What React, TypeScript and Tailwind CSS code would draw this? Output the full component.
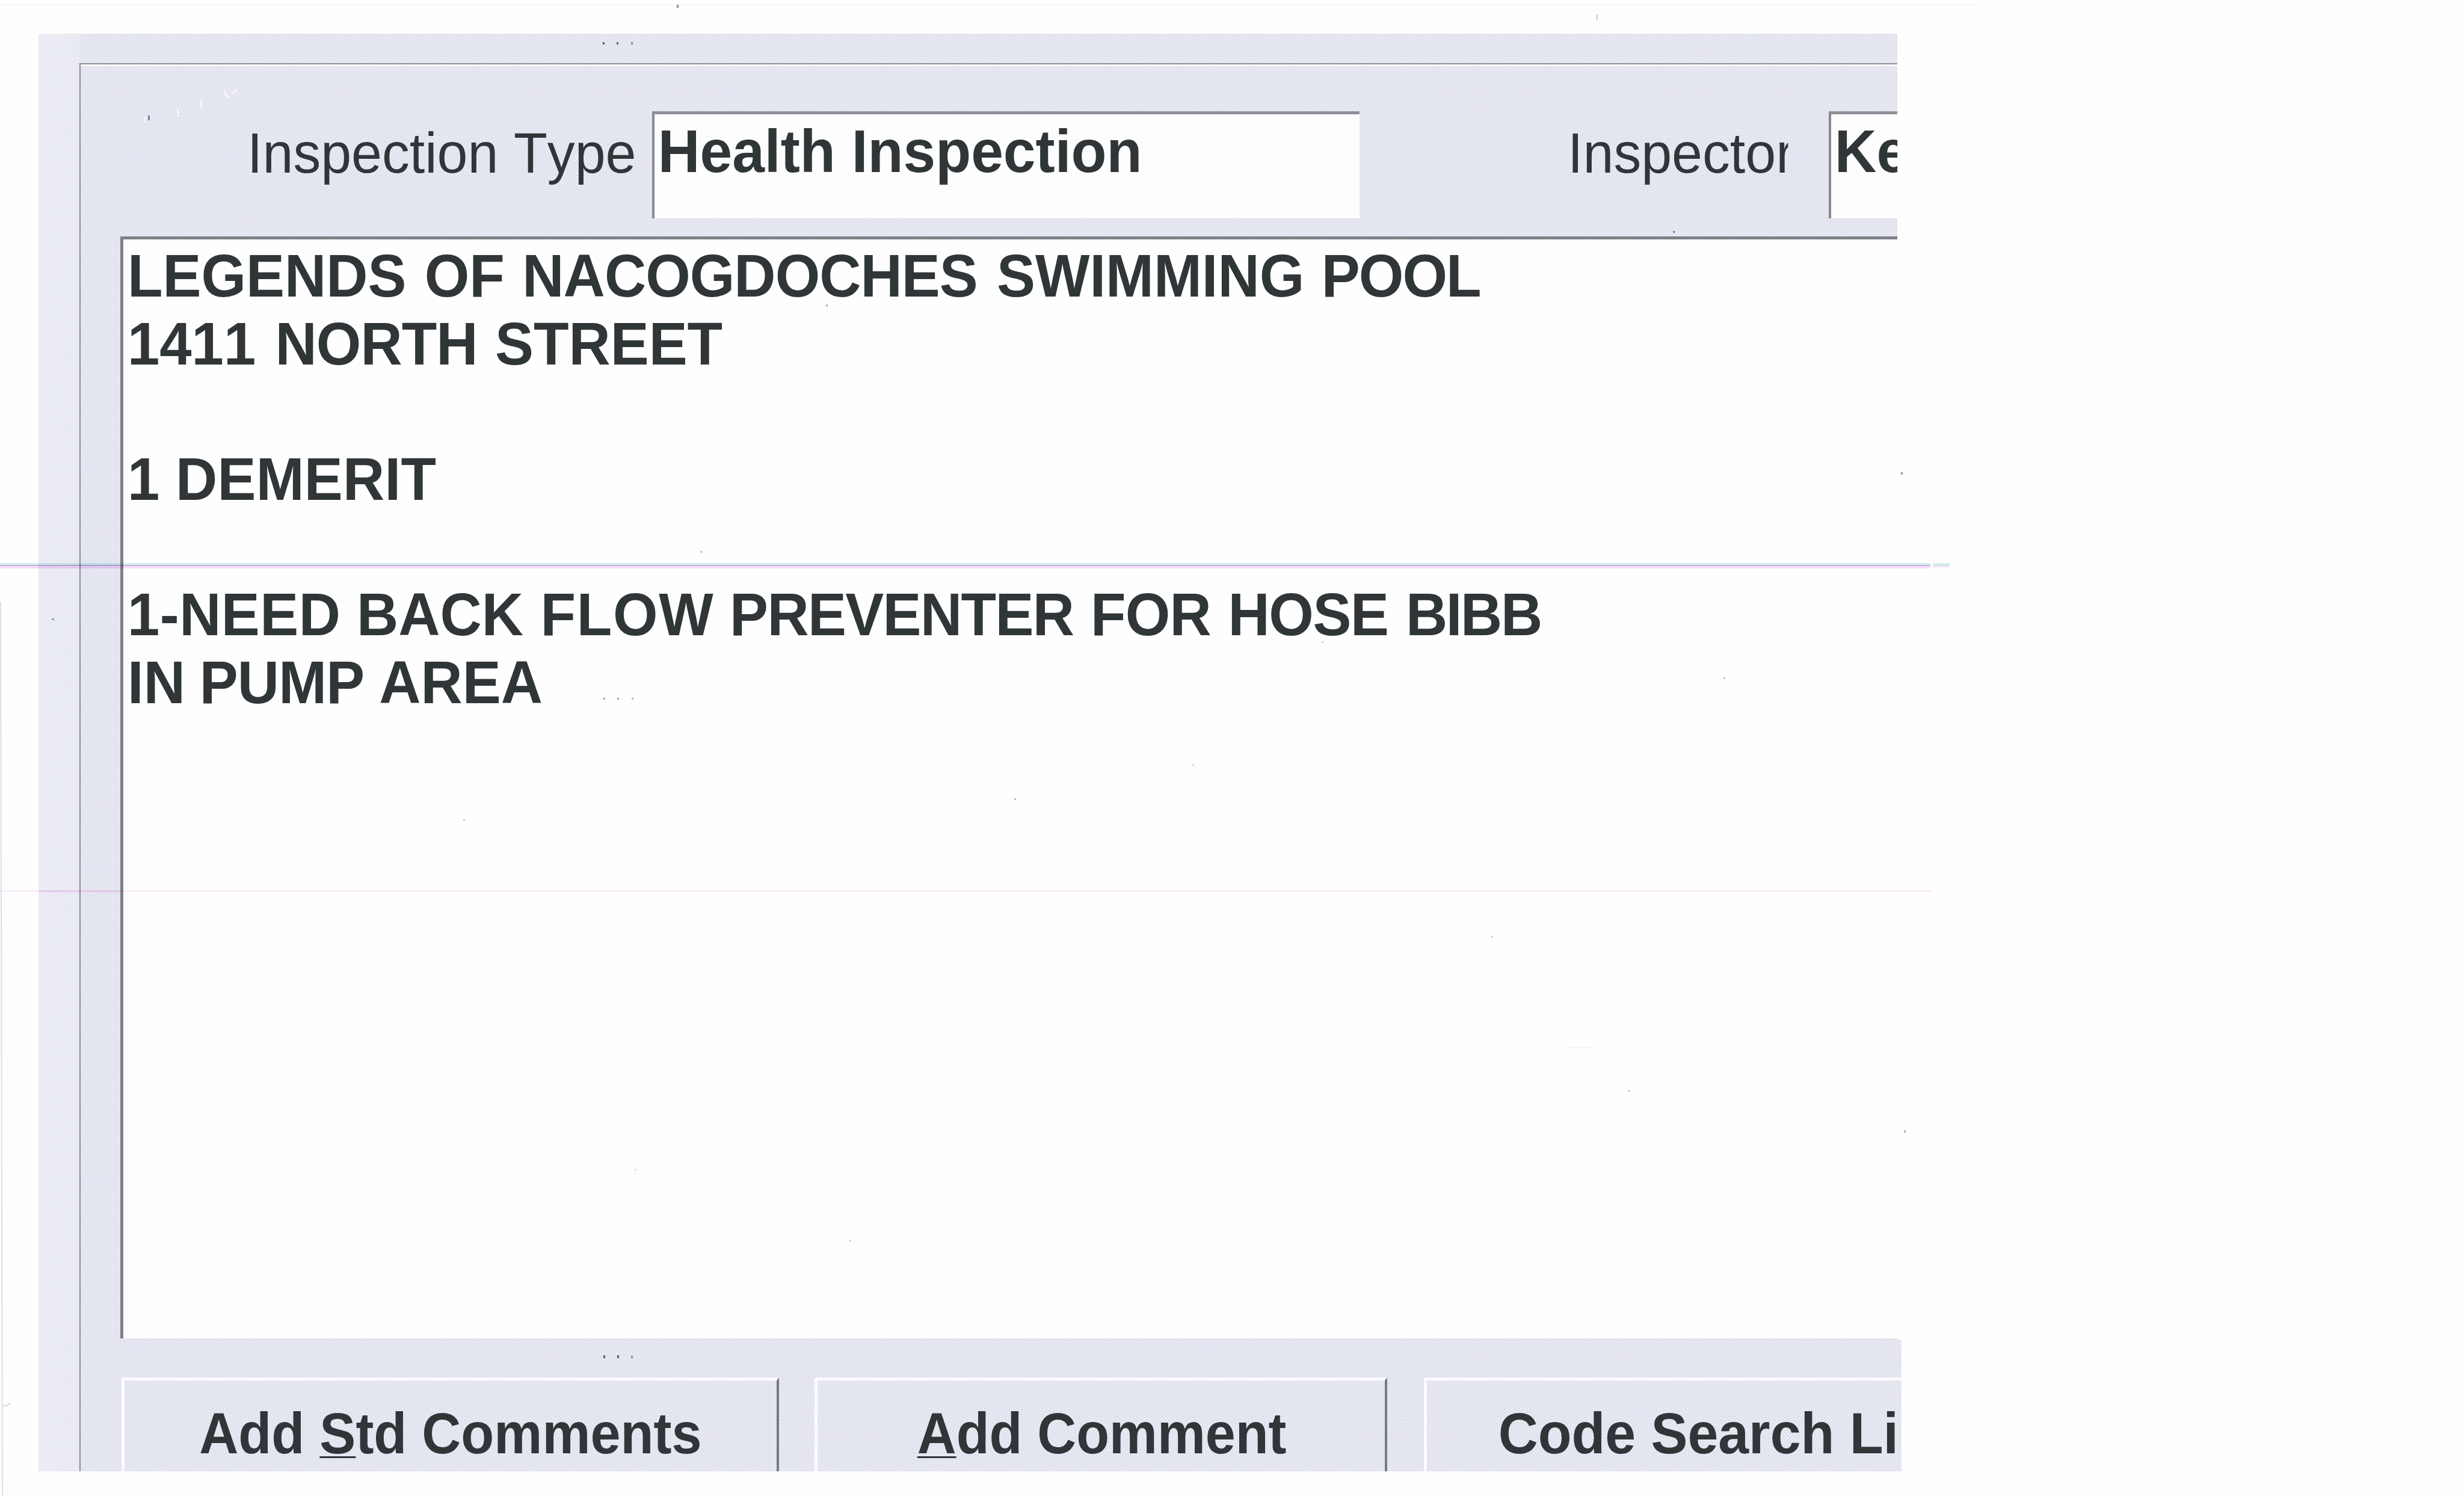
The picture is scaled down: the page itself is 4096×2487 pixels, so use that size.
import type { ReactNode } from "react";

const PANEL =
  "bg-[#e8e9f3] bg-[linear-gradient(to_right,rgba(255,255,255,0.25)_0,rgba(255,255,255,0.2)_66px,transparent_70px),radial-gradient(circle_at_25%_25%,#cfd2e0_0,transparent_1.6px),radial-gradient(circle_at_75%_75%,#d2d5e2_0,transparent_1.6px)] bg-[length:100%_100%,6px_6px,6px_6px]";

function Label({ children, className }: { children: ReactNode; className: string }) {
  return (
    <div
      className={`shrink-0 origin-left scale-x-[0.964] whitespace-nowrap text-[95px] leading-[112px] [font-kerning:none] ${className}`}
    >
      {children}
    </div>
  );
}

function Field({ children, className }: { children: ReactNode; className: string }) {
  return (
    <div
      className={`mt-[75px] h-[178px] shrink-0 overflow-hidden border-l-[4px] border-t-[5px] border-l-[#85888f] border-t-[#8d9098] bg-[#fdfdfd] ${className}`}
    >
      <div className="origin-left scale-x-[0.956] whitespace-nowrap pl-[6px] pt-[5px] text-[101px] font-bold leading-[112px] [font-kerning:none]">
        {children}
      </div>
    </div>
  );
}

function Button({ children, className, text }: { children: ReactNode; className: string; text: string }) {
  return (
    <div
      className={`h-[156px] shrink-0 overflow-hidden border-l-[5px] border-t-[5px] border-l-[#fbfbfe] border-t-[#fbfbfe] ${className}`}
    >
      <div
        className={`origin-left whitespace-nowrap pt-[39px] text-[97px] font-bold leading-[97px] [font-kerning:none] ${text}`}
      >
        {children}
      </div>
    </div>
  );
}

function Key({ children }: { children: ReactNode }) {
  return (
    <span className="underline decoration-[3px] underline-offset-[5px] [text-decoration-skip-ink:none]">
      {children}
    </span>
  );
}

// Each line is a list of words with their own spacing classes.
const COMMENTS: [string, string][][] = [
  [
    ["LEGENDS", ""],
    ["OF", "ml-[4px]"],
    ["NACOGDOCHES", "ml-[3px] tracking-[-1px]"],
    ["SWIMMING", "ml-[6px]"],
    ["POOL", "ml-[2px] tracking-[-2px]"],
  ],
  [
    ["1411", ""],
    ["NORTH", "ml-[6px] tracking-[-1px]"],
    ["STREET", "ml-[3px]"],
  ],
  [],
  [
    ["1", ""],
    ["DEMERIT", "tracking-[0.3px]"],
  ],
  [],
  [
    ["1-NEED", "tracking-[0.5px]"],
    ["BACK", ""],
    ["FLOW", "ml-[2px] tracking-[1.8px]"],
    ["PREVENTER", "-ml-[1px] tracking-[-1.7px]"],
    ["FOR", "ml-[2px] tracking-[-0.8px]"],
    ["HOSE", "ml-[2px] tracking-[-1.5px]"],
    ["BIBB", "ml-[3px] tracking-[-2.5px]"],
  ],
  [
    ["IN", ""],
    ["PUMP", "-ml-[3px] tracking-[-0.8px]"],
    ["AREA", "-ml-[2px]"],
  ],
];

// x, y, width, height, colour
const SPECKS: [number, number, number, number, string][] = [
  [1002, 70, 3, 4, "#6b6f78"],
  [1025, 70, 3, 4, "#6b6f78"],
  [1049, 70, 3, 4, "#9a9da6"],
  [1003, 2253, 3, 5, "#6b6f78"],
  [1026, 2253, 3, 5, "#6b6f78"],
  [1049, 2254, 3, 4, "#9a9da6"],
  [1003, 1160, 3, 3, "#9fa2a8"],
  [1026, 1160, 3, 3, "#9fa2a8"],
  [1050, 1160, 3, 3, "#b0b3b8"],
  [1125, 8, 3, 5, "#8a8e93"],
  [246, 192, 3, 8, "#8a90a4"],
  [2654, 24, 2, 9, "#c3c7cd"],
  [3160, 785, 3, 4, "#8c9aa4"],
  [2865, 1126, 3, 3, "#c8cbd0"],
  [86, 1028, 4, 3, "#a9acb5"],
  [770, 1362, 3, 3, "#c8cbd0"],
  [1164, 916, 4, 3, "#cbced3"],
  [1686, 1327, 3, 3, "#b8bbc0"],
  [2706, 1812, 3, 3, "#c8cbd0"],
  [2479, 1556, 3, 3, "#d3d6db"],
  [3165, 1879, 3, 4, "#b0b3b8"],
  [1055, 1943, 3, 3, "#d8dbe0"],
  [1412, 2061, 3, 3, "#d0d3d8"],
  [1982, 1270, 3, 3, "#d8dbe0"],
  [2197, 1066, 3, 3, "#ccd0d4"],
  [2600, 1741, 54, 2, "#f5f6f8"],
  [1373, 506, 3, 4, "#b8bbc0"],
  [2781, 384, 3, 3, "#8a8d98"],
];

export default function App() {
  return (
    <div className="relative h-[2487px] w-[4096px] overflow-hidden bg-[#fefefe] pl-[64px] pt-[56px] font-['Liberation_Sans',Arial,sans-serif] text-[#303538]">
      <div className={`h-[2171px] w-[3090px] overflow-hidden pl-[68px] pt-[49px] ${PANEL}`}>
        <div className="h-full border-l-[2px] border-t-[2px] border-[#8b8e96]">
          <div className="h-full border-t-[3px] border-[#fbfbfe]">
            <div className="flex h-[283px] items-start">
              <Label className="ml-[277px] mt-[88px] w-[673px]">Inspection Type</Label>
              <Field className="w-[1176px]">Health Inspection</Field>
              <Label className="ml-[346px] mt-[88px] w-[380px] overflow-hidden">Inspector</Label>
              <Field className="ml-[54px] w-[300px]">Ke</Field>
            </div>
            <div className="ml-[66px] h-[1832px] border-l-[5px] border-t-[5px] border-l-[#7d8087] border-t-[#7d8087] bg-[#fefefe] pl-[7px] pt-[4px]">
              {COMMENTS.map((line, i) => (
                <div
                  key={i}
                  className="h-[112.6px] origin-left scale-x-[0.949] whitespace-pre text-[101px] font-bold leading-[112.6px] [font-kerning:none]"
                >
                  {line.map(([word, spacing], n) => (
                    <span key={n}>
                      {n > 0 ? " " : ""}
                      <span className={spacing}>{word}</span>
                    </span>
                  ))}
                </div>
              ))}
            </div>
          </div>
        </div>
      </div>

      <div className={`h-[219px] w-[3097px] overflow-hidden pl-[68px] ${PANEL}`}>
        <div className="flex h-full items-end border-l-[2px] border-[#8b8e96] pl-[68px]">
          <Button className="w-[1093px] border-r-[4px] border-r-[#777a80]" text="scale-x-[0.928] pl-[134px]">
            Add <Key>S</Key>td Comments
          </Button>
          <Button className="ml-[59px] w-[952px] border-r-[4px] border-r-[#777a80]" text="scale-x-[0.926] pl-[179px]">
            <Key>A</Key>dd Comment
          </Button>
          <Button className="ml-[61px] w-[900px]" text="scale-x-[0.942] pl-[126px]">
            Code Search Li
          </Button>
        </div>
      </div>

      <svg className="pointer-events-none absolute left-0 top-0 mix-blend-multiply" width="4096" height="2487" viewBox="0 0 4096 2487">
        <rect x="0" y="936" width="3209" height="3" fill="#d2f5f3" />
        <rect x="3213" y="936" width="28" height="3" fill="#d8f4f3" />
        <rect x="0" y="939" width="3209" height="2" fill="#c4b4e0" />
        <rect x="3213" y="939" width="28" height="2" fill="#d3dced" />
        <rect x="0" y="941" width="3209" height="4" fill="#fbdbfa" />
        <rect x="3213" y="941" width="28" height="4" fill="#fcf0fc" />
        <rect x="0" y="1480" width="3212" height="2" fill="#fce6fb" />
        <rect x="64" y="1480" width="140" height="3" fill="#fbdcf6" />
        <rect x="0" y="7" width="3285" height="2" fill="#f7f9fb" />
        <path d="M1 1000L4 2487" stroke="#d7e3ee" strokeWidth="2" />
        <path d="M3 2334q4 8 14-2" fill="none" stroke="#d5dfe6" strokeWidth="2" />
        {SPECKS.map(([x, y, w, h, c]) => (
          <rect key={`${x}-${y}`} x={x} y={y} width={w} height={h} fill={c} />
        ))}
      </svg>
      <svg className="pointer-events-none absolute left-[230px] top-[140px]" width="180" height="80" viewBox="230 140 180 80">
        <path d="M374 150q2 12 7 13M386 156l8-8M337 166q-6 8-2 14M296 182v12M241 194v10" fill="none" stroke="#f6f6fb" strokeWidth="3" />
      </svg>
    </div>
  );
}
